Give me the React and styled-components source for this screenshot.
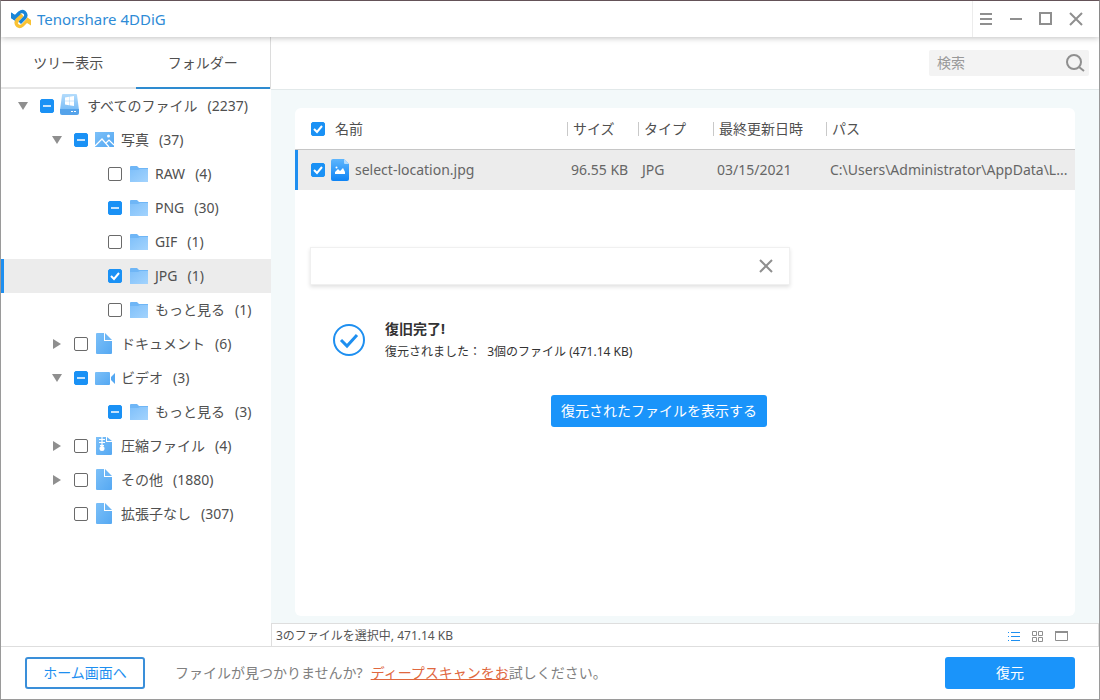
import React, { useState } from 'react';
import styled, { createGlobalStyle } from 'styled-components';

const GlobalStyle = createGlobalStyle`
  * {
    box-sizing: border-box;
  }

  body {
    margin: 0;
    font-family: 'Noto Sans', 'Noto Sans CJK JP', sans-serif;
    font-size: 14px;
    line-height: 20px;
    color: #505050;
    background: #fff;
  }

  button, input {
    font: inherit;
  }
`;

const Window = styled.div`
  display: flex;
  flex-direction: column;
  min-height: 100vh;
  border: 1px solid #9a9a9a;
  border-top-color: #6d5a60;
  background: #fff;
`;

const TitleBar = styled.header`
  display: flex;
  align-items: center;
  height: 36px;
  padding-left: 9px;
  box-shadow: 0 1px 6px rgba(0, 0, 0, 0.25);
  position: relative;
  z-index: 1;
`;

const AppName = styled.h1`
  flex: 1;
  margin: 0 0 0 5px;
  font-size: 15px;
  font-weight: 400;
  color: #2e8bd6;
`;

const WindowButtons = styled.div`
  display: flex;
  align-items: center;
  height: 36px;
  padding-right: 6px;
  border-left: 1px solid #ececec;
`;

const IconButton = styled.button`
  display: flex;
  align-items: center;
  justify-content: center;
  width: ${props => props.$width || 30}px;
  height: ${props => props.$height || 30}px;
  padding: 0;
  border: 0;
  background: none;
  color: ${props => (props.$active ? '#1e8ff0' : '#8f8f8f')};
`;

const Body = styled.div`
  display: flex;
  flex: 1;
`;

const Sidebar = styled.aside`
  width: 270px;
  flex-shrink: 0;
`;

const Tabs = styled.div`
  display: flex;
  height: 52px;
  border-right: 1px solid #dcdcdc;
`;

const Tab = styled.button`
  flex: 1;
  padding: 2px 0 0;
  border: 0;
  border-bottom: 2px solid ${props => (props.$active ? '#2e8bd0' : '#e6e6e6')};
  background: none;
  color: #505050;
`;

const Tree = styled.ul`
  margin: 0;
  padding: 0;
  list-style: none;
`;

const TreeRow = styled.li`
  display: flex;
  align-items: center;
  height: 34px;
  padding-left: ${props => 12 + props.$level * 34}px;
  border-left: 3px solid ${props => (props.$selected ? '#1e8ff0' : 'transparent')};
  background: ${props => (props.$selected ? '#ececec' : 'transparent')};
`;

const Toggle = styled.button`
  display: flex;
  align-items: center;
  justify-content: center;
  width: 14px;
  height: 20px;
  margin-right: 10px;
  padding: 0;
  border: 0;
  background: none;
  visibility: ${props => (props.$hidden ? 'hidden' : 'visible')};
`;

const TreeLabel = styled.label`
  display: flex;
  align-items: center;
  white-space: nowrap;
`;

const TreeIcon = styled.span`
  display: flex;
  width: 22px;
  margin: 0 5px 0 6px;
`;

const Count = styled.span`
  margin-left: 10px;
`;

const CheckWrap = styled.span`
  display: grid;
  width: 14px;
  height: 14px;

  > * {
    grid-area: 1 / 1;
  }

  svg {
    pointer-events: none;
  }
`;

const CheckInput = styled.input`
  appearance: none;
  width: 14px;
  height: 14px;
  margin: 0;
  border: 1px solid ${props => (props.$filled ? '#1a91f5' : '#6a6a6a')};
  border-radius: 2px;
  background: ${props => (props.$filled ? '#1a91f5' : '#fff')};
`;

const Main = styled.main`
  display: flex;
  flex: 1;
  flex-direction: column;
  min-width: 0;
`;

const Toolbar = styled.div`
  display: flex;
  align-items: center;
  justify-content: flex-end;
  height: 53px;
  padding-right: 10px;
  border-bottom: 1px solid #e2e9ea;
`;

const SearchBox = styled.div`
  display: flex;
  align-items: center;
  width: 160px;
  height: 26px;
  border-radius: 2px;
  background: #f3f3f3;
`;

const SearchInput = styled.input`
  flex: 1;
  min-width: 0;
  padding: 0 0 0 8px;
  border: 0;
  background: none;
  outline: 0;

  &::placeholder {
    color: #999;
  }
`;

const Content = styled.div`
  display: flex;
  flex: 1;
  padding: 18px 24px 7px;
  background: #f3f9fa;
`;

const Panel = styled.section`
  flex: 1;
  min-width: 0;
  border-radius: 6px;
  background: #fff;
`;

const FileTable = styled.table`
  width: 100%;
  table-layout: fixed;
  border-spacing: 0;
`;

const Col = styled.col`
  width: ${props => props.$width}px;
`;

const HeadCell = styled.th`
  height: 42px;
  padding: 0;
  border-bottom: 1px solid #c6c6c6;
  font-weight: 400;
  text-align: left;
  white-space: nowrap;
`;

const HeadLabel = styled.span`
  display: flex;
  align-items: center;

  &::before {
    content: '';
    width: 1px;
    height: 14px;
    margin-right: 5px;
    background: #c9c9c9;
  }
`;

const Cell = styled.td`
  height: 40px;
  padding: 0 0 0 4px;
  background: #ececec;
  color: #666;
  white-space: nowrap;
  overflow: hidden;
`;

const NameCell = styled(Cell)`
  padding: 0;
  border-left: 3px solid #1e8ff0;
`;

const NameLabel = styled.label`
  display: flex;
  align-items: center;
  gap: ${props => props.$gap}px;
  padding-left: ${props => props.$indent}px;
`;

const Dialog = styled.section`
  max-width: 480px;
  margin: 57px 15px 0;
`;

const DialogBar = styled.div`
  display: flex;
  align-items: center;
  justify-content: flex-end;
  height: 38px;
  padding-right: 9px;
  border: 1px solid #f0f0f0;
  box-shadow: 0 2px 4px rgba(0, 0, 0, 0.12);
`;

const Message = styled.div`
  display: flex;
  align-items: center;
  gap: 19px;
  padding: 32px 22px 0;
`;

const MessageTitle = styled.h2`
  margin: 0;
  font-size: 14px;
  line-height: 24px;
  color: #333;
`;

const MessageText = styled.p`
  margin: 0;
  font-size: 12px;
  line-height: 22px;
  color: #333;
`;

const DialogActions = styled.div`
  display: flex;
  justify-content: flex-end;
  padding: 32px 23px 0;
`;

const Button = styled.button`
  height: 32px;
  min-width: ${props => props.$minWidth || 0}px;
  padding: 0 10px;
  border: ${props => (props.$outline ? '2px solid #3a8fd9' : '0')};
  border-radius: 3px;
  background: ${props => (props.$outline ? '#fff' : '#1a94fa')};
  color: ${props => (props.$outline ? '#1e8ff0' : '#fff')};
`;

const StatusBar = styled.div`
  display: flex;
  align-items: center;
  justify-content: space-between;
  height: 23px;
  padding: 2px 24px 0 4px;
  border: 1px solid #dedede;
  border-width: 1px 1px 0;
  font-size: 12px;
  color: #555;
`;

const ViewButtons = styled.div`
  display: flex;
`;

const Footer = styled.footer`
  display: flex;
  align-items: center;
  height: 53px;
  padding: 0 24px;
  border-top: 1px solid #dedede;
`;

const Hint = styled.p`
  flex: 1;
  margin: 0 30px;
  color: #808080;
`;

const DeepScanLink = styled.a`
  margin-left: 8px;
  color: #e0683f;
  text-decoration-skip-ink: none;
`;

const ribbon = 'M1 3.500l4 2.500 3.500-3.500Q12-.5 15.500 2q4 4 .5 8l-5 5-2.500-2.500 5-5q1.500-2-.5-3-1.500-.8-3 .7L6.500 9Q4.500 10.500 6 12.500L1 9z';

const Logo = () => (
  <svg width="22" height="20" viewBox="0 0 22 20">
    <path d={ribbon} fill="#f9c234" transform="rotate(180 11 10)" />
    <path d={ribbon} fill="#1a86d8" />
    <path d="M5.500 12.500Q4.500 10 6.500 8l4-4 2.500 2.500-4 4q-1.500 1.500 0 3z" fill="#f9c234" />
    <path d="M1 3.500l4 2.500 3.500-3.500 2.500 2.500-4.500 4-2.500 2L1 9z" fill="#1a86d8" />
  </svg>
);

const Arrow = ({ open }) => (
  <svg width="12" height="12" viewBox="0 0 12 12" fill="#8f8f8f">
    <path d={open ? 'M1 2h10L6 10z' : 'M2 1v10l8-5z'} />
  </svg>
);

const Gradients = () => (
  <svg width="0" height="0" style={{ display: 'block' }} aria-hidden="true">
    <defs>
      <linearGradient id="light" x1="0" y1="0" x2="1" y2="1">
        <stop offset="0" stopColor="#7fc0fa" />
        <stop offset="1" stopColor="#a3d3fd" />
      </linearGradient>
      <linearGradient id="mid" x1="0" y1="0" x2="1" y2="1">
        <stop offset="0" stopColor="#7cc0f8" />
        <stop offset="1" stopColor="#55a8f2" />
      </linearGradient>
      <linearGradient id="strong" x1="0" y1="0" x2="0" y2="1">
        <stop offset="0" stopColor="#5fb6fd" />
        <stop offset="1" stopColor="#0d83f5" />
      </linearGradient>
      <linearGradient id="disk" x1="0" y1="0" x2="0" y2="1">
        <stop offset="0" stopColor="#b4dcfc" />
        <stop offset="1" stopColor="#79bcf6" />
      </linearGradient>
    </defs>
  </svg>
);

const icons = {
  disk: (
    <svg width="22" height="24" viewBox="0 0 22 24">
      <path d="M2 1q0-1 1-1h13q1 0 1 1l2 15H0z" fill="url(#disk)" />
      <path d="M0 15h19v4q0 2-2 2H2q-2 0-2-2z" fill="#55a3ea" />
      <path d="M5 3.500l4-.7v4H5zM9.400 2.800L14 2v4.800H9.400zM5 7.200h4v4l-4-.7zM9.400 7.200H14V12l-4.600-.8z" fill="#fff" />
      <path d="M11 17h2v1h-2zM14 17h2v1h-2z" fill="#fff" />
    </svg>
  ),
  image: (
    <svg width="22" height="24" viewBox="0 0 22 24">
      <path d="M1 4h19v15H1z" fill="url(#mid)" />
      <path d="M1 18l7-7 7 8M12 15l3-3 5 5" fill="none" stroke="#fff" strokeWidth="1.200" />
      <circle cx="14.500" cy="8" r="1.500" fill="#fff" />
    </svg>
  ),
  folder: (
    <svg width="22" height="24" viewBox="0 0 22 24">
      <path d="M2 5q0-1 1-1h6l2 2h9v5H2z" fill="#6fb6f6" />
      <path d="M2 8h8l2-1h8v13H2z" fill="url(#light)" />
    </svg>
  ),
  document: (
    <svg width="22" height="24" viewBox="0 0 22 24">
      <path d="M2 2q0-1 1-1h7v8h8v12q0 1-1 1H3q-1 0-1-1z" fill="url(#mid)" />
      <path d="M11 1l7 7h-7z" fill="#6db6f6" />
    </svg>
  ),
  video: (
    <svg width="22" height="24" viewBox="0 0 22 24">
      <path d="M1 7q0-1 1-1h13q1 0 1 1v11q0 1-1 1H2q-1 0-1-1z" fill="url(#mid)" />
      <path d="M17 11l4-4v11l-4-4z" fill="#55a8f2" />
    </svg>
  ),
  archive: (
    <svg width="22" height="24" viewBox="0 0 22 24">
      <path d="M2 3h10v5h6v12q0 1-1 1H3q-1 0-1-1z" fill="url(#mid)" />
      <path d="M13 3l5 4h-5z" fill="#6db6f6" />
      <path d="M8 3v10M5 5.500h6M5 8.500h6M6 11.500h4" stroke="#fff" strokeWidth="1.200" />
      <circle cx="8" cy="14.500" r="2.500" fill="#fff" />
    </svg>
  ),
};

const JpgIcon = () => (
  <svg width="18" height="22" viewBox="0 0 18 22">
    <path d="M0 2q0-2 2-2h11l5 5v15q0 2-2 2H2q-2 0-2-2z" fill="url(#strong)" />
    <path d="M13 0l5 5h-4q-1 0-1-1z" fill="#b5dcfd" />
    <path d="M4 15v-2l3-3 2 2 3-3 2 4v2z" fill="#fff" />
    <circle cx="5.500" cy="8.500" r="1" fill="#fff" />
  </svg>
);

const CloseIcon = () => (
  <svg width="14" height="14" viewBox="0 0 14 14" stroke="currentColor" strokeWidth="2">
    <path d="M1 1l12 12M13 1L1 13" />
  </svg>
);

const Checkbox = ({ id, state, label, onChange }) => (
  <CheckWrap>
    <CheckInput
      type="checkbox"
      id={id}
      aria-label={label}
      checked={state === 'on'}
      $filled={state !== 'off'}
      ref={el => { if (el) el.indeterminate = state === 'mixed'; }}
      onChange={onChange}
    />
    <svg width="14" height="14" viewBox="0 0 14 14" fill="none" stroke="#fff" strokeWidth="2">
      {state === 'on' && <path d="M3 7l3 3 5-6" />}
      {state === 'mixed' && <path d="M3 7h8" strokeWidth="1.500" />}
    </svg>
  </CheckWrap>
);

const nodes = [
  { id: 'all', level: 0, open: true, check: 'mixed', icon: 'disk', name: 'すべてのファイル', count: 2237 },
  { id: 'photo', level: 1, open: true, check: 'mixed', icon: 'image', name: '写真', count: 37 },
  { id: 'raw', level: 2, check: 'off', icon: 'folder', name: 'RAW', count: 4 },
  { id: 'png', level: 2, check: 'mixed', icon: 'folder', name: 'PNG', count: 30 },
  { id: 'gif', level: 2, check: 'off', icon: 'folder', name: 'GIF', count: 1 },
  { id: 'jpg', level: 2, check: 'on', icon: 'folder', name: 'JPG', count: 1, selected: true },
  { id: 'photo-more', level: 2, check: 'off', icon: 'folder', name: 'もっと見る', count: 1 },
  { id: 'document', level: 1, open: false, check: 'off', icon: 'document', name: 'ドキュメント', count: 6 },
  { id: 'video', level: 1, open: true, check: 'mixed', icon: 'video', name: 'ビデオ', count: 3 },
  { id: 'video-more', level: 2, check: 'mixed', icon: 'folder', name: 'もっと見る', count: 3 },
  { id: 'archive', level: 1, open: false, check: 'off', icon: 'archive', name: '圧縮ファイル', count: 4 },
  { id: 'other', level: 1, open: false, check: 'off', icon: 'document', name: 'その他', count: 1880 },
  { id: 'no-ext', level: 1, check: 'off', icon: 'document', name: '拡張子なし', count: 307 },
];

const App = () => {
  const [checks, setChecks] = useState(
    Object.fromEntries(nodes.map(node => [node.id, node.check]))
  );
  const [fileCheck, setFileCheck] = useState('on');

  const toggleNode = (id) => {
    setChecks({ ...checks, [id]: checks[id] === 'on' ? 'off' : 'on' });
  };

  const toggleFile = () => setFileCheck(fileCheck === 'on' ? 'off' : 'on');

  return (
    <Window>
      <GlobalStyle />
      <Gradients />
      <TitleBar>
        <Logo />
        <AppName>Tenorshare 4DDiG</AppName>
        <WindowButtons>
          <IconButton aria-label="メニュー" $width={26}>
            <svg width="12" height="14" viewBox="0 0 12 14" stroke="currentColor" strokeWidth="2">
              <path d="M0 2h12M0 7h12M0 12h12" />
            </svg>
          </IconButton>
          <IconButton aria-label="最小化" $width={34}>
            <svg width="12" height="14" viewBox="0 0 12 14" stroke="currentColor" strokeWidth="2">
              <path d="M0 7h12" />
            </svg>
          </IconButton>
          <IconButton aria-label="最大化" $width={26}>
            <svg width="14" height="14" viewBox="0 0 14 14" fill="none" stroke="currentColor" strokeWidth="2">
              <path d="M1 1h11v11H1z" />
            </svg>
          </IconButton>
          <IconButton aria-label="閉じる" $width={34}>
            <CloseIcon />
          </IconButton>
        </WindowButtons>
      </TitleBar>

      <Body>
        <Sidebar>
          <Tabs>
            <Tab>ツリー表示</Tab>
            <Tab $active>フォルダー</Tab>
          </Tabs>
          <Tree>
            {nodes.map(node => (
              <TreeRow key={node.id} $level={node.level} $selected={node.selected}>
                <Toggle $hidden={node.open === undefined} aria-label={node.name + 'を開閉'}>
                  <Arrow open={node.open} />
                </Toggle>
                <Checkbox id={node.id} state={checks[node.id]} onChange={() => toggleNode(node.id)} />
                <TreeLabel htmlFor={node.id}>
                  <TreeIcon>{icons[node.icon]}</TreeIcon>
                  {node.name}
                  <Count>({node.count})</Count>
                </TreeLabel>
              </TreeRow>
            ))}
          </Tree>
        </Sidebar>

        <Main>
          <Toolbar>
            <SearchBox>
              <SearchInput type="text" placeholder="検索" aria-label="検索" />
              <IconButton aria-label="検索" $width={28} $height={26}>
                <svg width="20" height="20" viewBox="0 0 20 20" fill="none" stroke="currentColor" strokeWidth="2">
                  <circle cx="9" cy="9" r="7" />
                  <path d="M14 14l5 4" />
                </svg>
              </IconButton>
            </SearchBox>
          </Toolbar>

          <Content>
            <Panel>
              <FileTable>
                <colgroup>
                  <Col $width={272} />
                  <Col $width={71} />
                  <Col $width={75} />
                  <Col $width={113} />
                  <col />
                </colgroup>
                <thead>
                  <tr>
                    <HeadCell>
                      <NameLabel $gap={10} $indent={16}>
                        <Checkbox state={fileCheck} onChange={toggleFile} />
                        名前
                      </NameLabel>
                    </HeadCell>
                    <HeadCell><HeadLabel>サイズ</HeadLabel></HeadCell>
                    <HeadCell><HeadLabel>タイプ</HeadLabel></HeadCell>
                    <HeadCell><HeadLabel>最終更新日時</HeadLabel></HeadCell>
                    <HeadCell><HeadLabel>パス</HeadLabel></HeadCell>
                  </tr>
                </thead>
                <tbody>
                  <tr>
                    <NameCell>
                      <NameLabel $gap={6} $indent={13}>
                        <Checkbox state={fileCheck} onChange={toggleFile} />
                        <JpgIcon />
                        select-location.jpg
                      </NameLabel>
                    </NameCell>
                    <Cell>96.55 KB</Cell>
                    <Cell>JPG</Cell>
                    <Cell>03/15/2021</Cell>
                    <Cell>C:\Users\Administrator\AppData\L...</Cell>
                  </tr>
                </tbody>
              </FileTable>

              <Dialog>
                <DialogBar>
                  <IconButton aria-label="閉じる" $width={28}>
                    <CloseIcon />
                  </IconButton>
                </DialogBar>
                <Message>
                  <svg width="34" height="34" viewBox="0 0 34 34" fill="none" stroke="#1e8ff0">
                    <circle cx="17" cy="17" r="15" strokeWidth="2" />
                    <path d="M9 17l6 6 10-11" strokeWidth="3" />
                  </svg>
                  <div>
                    <MessageTitle>復旧完了!</MessageTitle>
                    <MessageText>復元されました：&nbsp; 3個のファイル (471.14 KB)</MessageText>
                  </div>
                </Message>
                <DialogActions>
                  <Button>復元されたファイルを表示する</Button>
                </DialogActions>
              </Dialog>
            </Panel>
          </Content>

          <StatusBar>
            <span>3のファイルを選択中, 471.14 KB</span>
            <ViewButtons>
              <IconButton aria-label="リスト" $active $width={24} $height={20}>
                <svg width="12" height="12" viewBox="0 0 12 12" fill="currentColor" shapeRendering="crispEdges">
                  <path d="M0 2h1v1H0zM3 2h9v1H3zM0 6h1v1H0zM3 6h9v1H3zM0 10h1v1H0zM3 10h9v1H3z" />
                </svg>
              </IconButton>
              <IconButton aria-label="グリッド" $width={24} $height={20}>
                <svg width="12" height="12" viewBox="0 0 12 12" fill="none" stroke="currentColor">
                  <path d="M.5 1.500h4v4h-4zM6.500 1.500h4v4h-4zM.5 7.500h4v4h-4zM6.500 7.500h4v4h-4z" />
                </svg>
              </IconButton>
              <IconButton aria-label="プレビュー" $width={24} $height={20}>
                <svg width="14" height="12" viewBox="0 0 14 12" fill="none" stroke="currentColor">
                  <path d="M.5 1.500h12v9H.5z" />
                  <path d="M0 2h13" strokeWidth="2" />
                </svg>
              </IconButton>
            </ViewButtons>
          </StatusBar>
        </Main>
      </Body>

      <Footer>
        <Button $outline $minWidth={120}>ホーム画面へ</Button>
        <Hint>
          ファイルが見つかりませんか?
          <DeepScanLink href="#deep-scan">ディープスキャンをお</DeepScanLink>
          試しください。
        </Hint>
        <Button $minWidth={130}>復元</Button>
      </Footer>
    </Window>
  );
};

export default App;
